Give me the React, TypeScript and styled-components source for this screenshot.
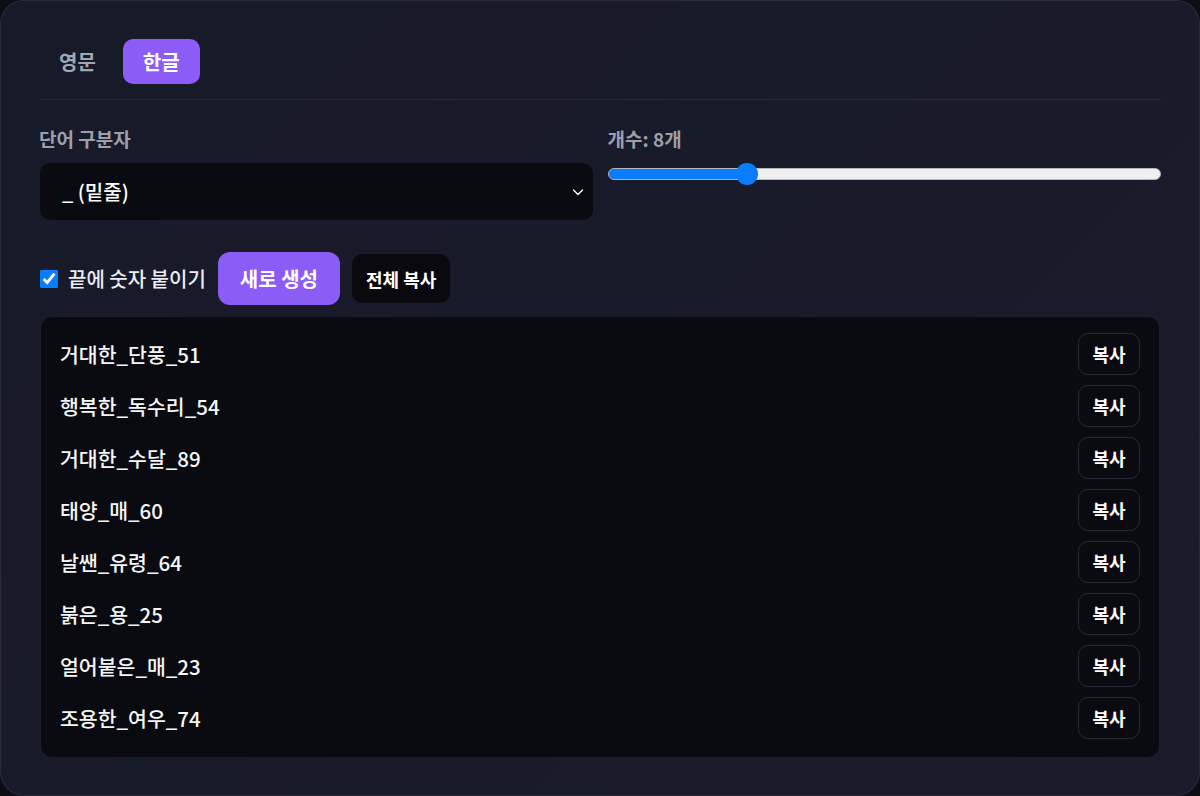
import { CSSProperties, FunctionComponent, useState } from "react";
import styled, { createGlobalStyle } from "styled-components";

const GlobalStyle = createGlobalStyle`
  html, body {
    margin: 0;
    padding: 0;
    background: #0c0e15;
  }
  * {
    box-sizing: border-box;
  }
  body {
    font-family: "Noto Sans CJK KR", "Noto Sans", sans-serif;
    color: #f3f4f6;
  }
`;

const Card = styled.div`
  width: 1200px;
  height: 796px;
  border-radius: 24px;
  border: 1px solid rgba(255, 255, 255, 0.07);
  background: linear-gradient(135deg, #171a29 0%, #191b2b 60%, #1a1c2b 100%);
  padding: 38px 38px;
  display: flex;
  flex-direction: column;
`;

const Tabs = styled.div`
  display: flex;
  gap: 7px;
  padding-bottom: 15px;
  border-bottom: 1px solid #262a3a;
`;

const Tab = styled.button<{ $active?: boolean }>`
  height: 45px;
  padding: 0 20px;
  border: none;
  border-radius: 10px;
  font-family: inherit;
  font-size: 20px;
  font-weight: 700;
  cursor: pointer;
  background: ${(p) => (p.$active ? "#8b5cf6" : "transparent")};
  color: ${(p) => (p.$active ? "#ffffff" : "#a3a7b4")};
`;

const Controls = styled.div`
  display: grid;
  grid-template-columns: 1fr 1fr;
  gap: 15px;
  margin-top: 28px;
`;

const Field = styled.div`
  display: flex;
  flex-direction: column;
  gap: 13px;
`;

const Label = styled.div`
  font-size: 19px;
  line-height: 22px;
  font-weight: 700;
  color: #9ca0ad;
`;

const SelectWrap = styled.div`
  position: relative;
  margin-left: 1px;
`;

const Select = styled.select`
  width: 100%;
  height: 57px;
  appearance: none;
  border: none;
  border-radius: 10px;
  background: #0a0b10;
  color: #ffffff;
  font-family: inherit;
  font-size: 20px;
  font-weight: 500;
  padding: 0 22px;
  outline: none;
`;

const Chevron = styled.svg`
  position: absolute;
  right: 7px;
  top: 50%;
  transform: translateY(-50%);
  pointer-events: none;
`;

const SliderRow = styled.div`
  display: flex;
  align-items: center;
  height: 22px;
`;

// track filled up to --fill, thumb drawn as a plain blue disc
const Range = styled.input`
  -webkit-appearance: none;
  appearance: none;
  width: 100%;
  height: 12px;
  margin: 0;
  border-radius: 6px;
  border: 1px solid #b4b6be;
  background: linear-gradient(
    to right,
    #0a7cff 0%,
    #0a7cff var(--fill),
    #efeff2 var(--fill),
    #efeff2 100%
  );
  outline: none;

  &::-webkit-slider-thumb {
    -webkit-appearance: none;
    appearance: none;
    width: 22px;
    height: 22px;
    border-radius: 50%;
    background: #0a7cff;
    border: none;
    cursor: pointer;
  }
  &::-moz-range-thumb {
    width: 22px;
    height: 22px;
    border-radius: 50%;
    background: #0a7cff;
    border: none;
  }
`;

const Actions = styled.div`
  display: flex;
  align-items: center;
  gap: 12px;
  margin-top: 32px;
`;

const CheckLabel = styled.label`
  display: flex;
  align-items: center;
  gap: 10px;
  font-size: 20px;
  font-weight: 500;
  color: #eceef2;
`;

const Check = styled.input`
  width: 18px;
  height: 18px;
  margin: 0 0 0 1px;
  accent-color: #0a7cff;
`;

const PrimaryButton = styled.button`
  height: 53px;
  padding: 0 22px;
  border: none;
  border-radius: 12px;
  background: #8b5cf6;
  color: #ffffff;
  font-family: inherit;
  font-size: 20px;
  font-weight: 700;
  cursor: pointer;
`;

const DarkButton = styled.button`
  height: 49px;
  padding: 0 14px;
  border: none;
  border-radius: 10px;
  background: #0a0a0e;
  color: #ffffff;
  font-family: inherit;
  font-size: 18px;
  font-weight: 700;
  cursor: pointer;
`;

const List = styled.div`
  margin-top: 11px;
  margin-left: 1px;
  margin-right: 1px;
  background: #0a0b10;
  border: 1px solid #1b1e2a;
  border-radius: 12px;
  padding: 16px 19px 18px 19px;
  display: flex;
  flex-direction: column;
  gap: 10px;
`;

const Row = styled.div`
  height: 42px;
  display: flex;
  align-items: center;
  justify-content: space-between;
`;

const Name = styled.span`
  font-size: 20.5px;
  font-weight: 500;
  color: #f5f6f8;
`;

const CopyButton = styled.button`
  width: 62px;
  height: 42px;
  padding: 0;
  border: 1px solid #262937;
  border-radius: 10px;
  background: transparent;
  color: #ffffff;
  font-family: inherit;
  font-size: 18px;
  font-weight: 700;
  cursor: pointer;
`;

const names = [
  "거대한_단풍_51",
  "행복한_독수리_54",
  "거대한_수달_89",
  "태양_매_60",
  "날쌘_유령_64",
  "붉은_용_25",
  "얼어붙은_매_23",
  "조용한_여우_74",
];

const MIN = 1;
const MAX = 30;

const App: FunctionComponent = () => {
  const [lang, setLang] = useState("ko");
  const [count, setCount] = useState(8);
  const [suffix, setSuffix] = useState(true);

  // where the thumb centre sits on a 552px track with a 22px thumb
  const t = (count - MIN) / (MAX - MIN);
  const fill = ((11 + 530 * t) / 552) * 100;

  return (
    <>
      <GlobalStyle />
      <Card>
        <Tabs>
          <Tab $active={lang === "en"} onClick={() => setLang("en")}>
            영문
          </Tab>
          <Tab $active={lang === "ko"} onClick={() => setLang("ko")}>
            한글
          </Tab>
        </Tabs>

        <Controls>
          <Field>
            <Label>단어 구분자</Label>
            <SelectWrap>
              <Select defaultValue="_">
                <option value="_">_ (밑줄)</option>
                <option value="-">- (하이픈)</option>
                <option value=".">. (마침표)</option>
              </Select>
              <Chevron width="16" height="16" viewBox="0 0 16 16" fill="none">
                <path
                  d="M3.5 6 L8 10.5 L12.5 6"
                  stroke="#ffffff"
                  strokeWidth="1.4"
                  strokeLinecap="round"
                  strokeLinejoin="round"
                />
              </Chevron>
            </SelectWrap>
          </Field>
          <Field>
            <Label>개수: {count}개</Label>
            <SliderRow>
              <Range
                type="range"
                min={MIN}
                max={MAX}
                value={count}
                style={{ "--fill": `${fill}%` } as CSSProperties}
                onChange={(e) => setCount(Number(e.target.value))}
              />
            </SliderRow>
          </Field>
        </Controls>

        <Actions>
          <CheckLabel>
            <Check
              type="checkbox"
              checked={suffix}
              onChange={(e) => setSuffix(e.target.checked)}
            />
            끝에 숫자 붙이기
          </CheckLabel>
          <PrimaryButton>새로 생성</PrimaryButton>
          <DarkButton>전체 복사</DarkButton>
        </Actions>

        <List>
          {names.map((n) => (
            <Row key={n}>
              <Name>{n}</Name>
              <CopyButton>복사</CopyButton>
            </Row>
          ))}
        </List>
      </Card>
    </>
  );
};

export default App;
